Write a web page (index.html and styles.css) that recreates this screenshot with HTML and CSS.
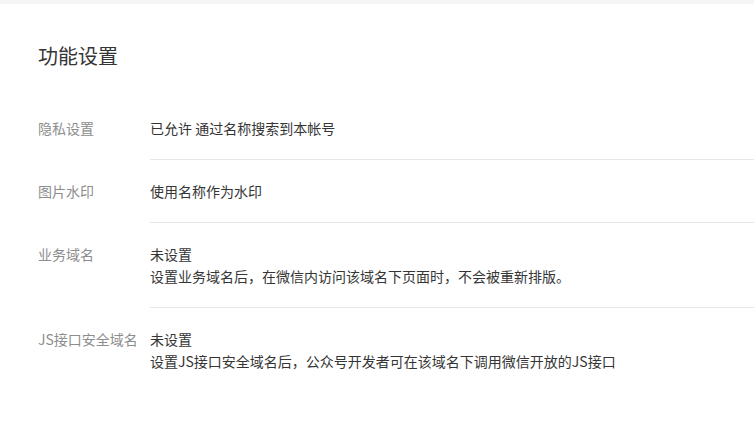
FILE: index.html
```html
<!DOCTYPE html>
<html lang="zh-CN">
<head>
  <meta charset="UTF-8">
  <title>功能设置</title>
  <link rel="stylesheet" href="styles.css">
</head>
<body>
  <div class="topbar"></div>

  <section class="settings">
    <h2 class="settings-title">功能设置</h2>

    <ul class="setting-list">
      <li class="setting-item">
        <span class="setting-label">隐私设置</span>
        <div class="setting-value">
          <p>已允许 通过名称搜索到本帐号</p>
        </div>
      </li>
      <li class="setting-item">
        <span class="setting-label">图片水印</span>
        <div class="setting-value">
          <p>使用名称作为水印</p>
        </div>
      </li>
      <li class="setting-item">
        <span class="setting-label">业务域名</span>
        <div class="setting-value">
          <p>未设置</p>
          <p>设置业务域名后，在微信内访问该域名下页面时，不会被重新排版。</p>
        </div>
      </li>
      <li class="setting-item">
        <span class="setting-label">JS接口安全域名</span>
        <div class="setting-value">
          <p>未设置</p>
          <p>设置JS接口安全域名后，公众号开发者可在该域名下调用微信开放的JS接口</p>
        </div>
      </li>
    </ul>
  </section>
</body>
</html>
```

FILE: styles.css
```css
body {
  margin: 0;
  padding: 0;
  background: #fff;
  color: #353535;
  font-family: "Noto Sans CJK SC", "Liberation Sans", sans-serif;
  font-size: 14px;
}

.topbar {
  height: 4px;
  background: #f4f5f7;
}

.settings {
  padding-left: 38px;
}

.settings-title {
  margin: 0;
  padding-top: 37px;
  font-size: 20px;
  font-weight: normal;
  line-height: 30px;
}

.setting-list {
  list-style: none;
  margin: 26px 0 0;
  padding: 0;
}

.setting-item {
  display: flex;
}

.setting-label {
  width: 112px;
  flex-shrink: 0;
  padding: 20px 0;
  color: #8d8d8d;
  line-height: 22px;
}

.setting-value {
  flex: 1;
  padding: 20px 0;
  border-bottom: 1px solid #e7e7eb;
  line-height: 22px;
}

.setting-item:last-child .setting-value {
  border-bottom: none;
}

.setting-value p {
  margin: 0;
}
```
